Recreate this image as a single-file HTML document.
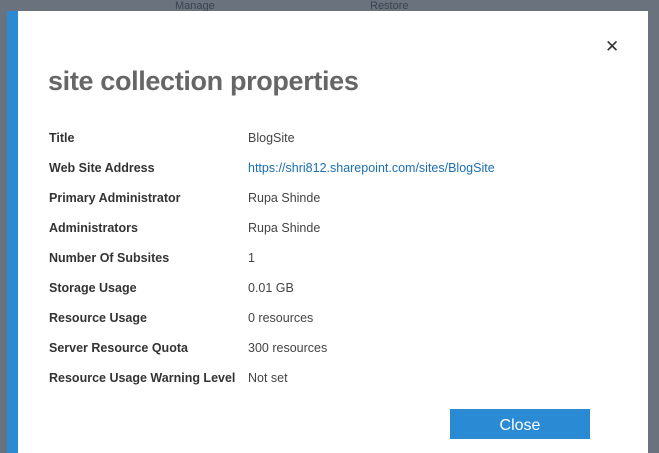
<!DOCTYPE html>
<html><head><style>
body{margin:0;width:659px;height:453px;overflow:hidden;background:#6a737d;font-family:"Segoe UI","Liberation Sans",sans-serif;position:relative}
.bgtxt{position:absolute;color:#3a4450;font-size:11px}
.blue{position:absolute;left:7px;top:11px;width:11px;height:442px;background:#2a8ad4}
.dlg{position:absolute;left:18px;top:11px;width:630px;height:442px;background:#fff}
.x{position:absolute;left:587px;top:26px;font-size:17px;color:#333}
h1{position:absolute;left:30px;top:55px;margin:0;font-size:27px;font-weight:bold;color:#666;letter-spacing:-0.35px}
.row{position:absolute;left:31px;font-size:12.5px;color:#333}
.row b{position:absolute;left:0;white-space:nowrap;color:#333}
.row span{position:absolute;left:199px;white-space:nowrap;color:#444}
a{color:#1a6fb5;text-decoration:none}
.btn{position:absolute;left:432px;top:398px;width:140px;height:30px;background:#2a8ad4;color:#fff;font-size:16px;text-align:center;line-height:34px}
</style></head><body>
<div class="bgtxt" style="left:175px;top:0">Manage</div>
<div class="bgtxt" style="left:370px;top:0">Restore</div>
<div class="blue"></div>
<div class="dlg">
<div class="x">✕</div>
<h1>site collection properties</h1>
<div class="row" style="top:120px"><b>Title</b><span>BlogSite</span></div>
<div class="row" style="top:150px"><b>Web Site Address</b><span><a>https://shri812.sharepoint.com/sites/BlogSite</a></span></div>
<div class="row" style="top:180px"><b>Primary Administrator</b><span>Rupa Shinde</span></div>
<div class="row" style="top:210px"><b>Administrators</b><span>Rupa Shinde</span></div>
<div class="row" style="top:240px"><b>Number Of Subsites</b><span>1</span></div>
<div class="row" style="top:270px"><b>Storage Usage</b><span>0.01 GB</span></div>
<div class="row" style="top:300px"><b>Resource Usage</b><span>0 resources</span></div>
<div class="row" style="top:330px"><b>Server Resource Quota</b><span>300 resources</span></div>
<div class="row" style="top:360px"><b>Resource Usage Warning Level</b><span>Not set</span></div>
<div class="btn">Close</div>
</div>
</body></html>
